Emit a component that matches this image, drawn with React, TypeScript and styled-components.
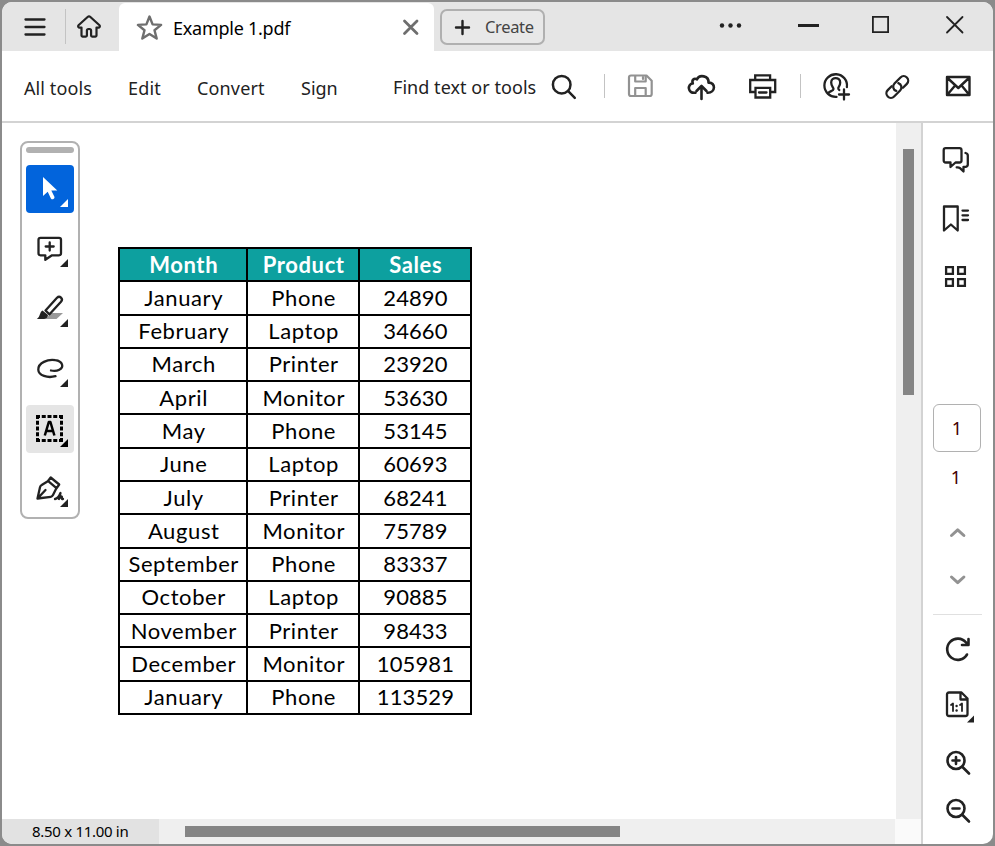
import React from "react";
import styled, { createGlobalStyle } from "styled-components";

const Global = createGlobalStyle`
  * { box-sizing: border-box; }
  html, body { margin: 0; padding: 0; background: #8b8b8b; }
  body { font-family: "Noto Sans", "Liberation Sans", sans-serif; color: #222; overflow: hidden; }
  svg { display: block; flex: none; overflow: visible; }
`;

const Frame = styled.div`
  width: 995px;
  height: 846px;
  padding: 2px;
  background: #8b8b8b;
`;
const Window = styled.div`
  display: flex;
  flex-direction: column;
  width: 991px;
  height: 842px;
  overflow: hidden;
  border-radius: 10px;
  background: #fff;
`;
const TitleBar = styled.header`
  display: flex;
  flex: none;
  height: 49px;
  background: #e5e5e5;
`;
const TitleLeft = styled.div`
  display: flex;
  align-items: center;
  width: 117px;
  padding-left: 22px;
`;
const Rule = styled.span<{ $h: number; $ml: number; $mr: number }>`
  flex: none;
  width: 1px;
  height: ${(p) => p.$h}px;
  margin: 0 ${(p) => p.$mr}px 0 ${(p) => p.$ml}px;
  background: #c3c3c3;
`;
const Tab = styled.div`
  display: flex;
  align-items: center;
  width: 315px;
  height: 48px;
  margin-top: 1px;
  padding: 0 15px 0 17px;
  border-radius: 6px 6px 0 0;
  background: #fff;
`;
const Label = styled.span<{ $size?: number; $track?: number; $color?: string }>`
  flex: none;
  white-space: nowrap;
  line-height: 24px;
  font-size: ${(p) => p.$size ?? 18}px;
  letter-spacing: ${(p) => p.$track ?? 0}px;
  color: ${(p) => p.$color ?? "#222"};
`;
const TabTitle = styled(Label)`
  flex: 1;
  margin: 2px 0 0 10px;
`;
const CreateButton = styled.button`
  display: flex;
  align-items: center;
  width: 105px;
  height: 36px;
  margin: 7px 0 0 6px;
  padding: 0 0 0 13px;
  gap: 15px;
  border: 2px solid #b0b0b0;
  border-radius: 7px;
  background: #e8e8e8;
  font-family: inherit;
`;
const WindowControls = styled.div`
  display: flex;
  align-items: flex-start;
  margin-left: auto;
  padding: 9px 24px 0 0;
`;
const ControlIcon = styled.span<{ $mr: number }>`
  margin-right: ${(p) => p.$mr}px;
`;
const Toolbar = styled.nav`
  display: flex;
  flex: none;
  align-items: center;
  height: 72px;
  padding-left: 22px;
  border-bottom: 2px solid #d3d3d3;
`;
const MenuItem = styled.div<{ $w: number; $pt?: number }>`
  flex: none;
  width: ${(p) => p.$w}px;
  padding-top: ${(p) => p.$pt ?? 4}px;
  line-height: 24px;
`;
const IconSlot = styled.span<{ $ml: number }>`
  flex: none;
  margin-left: ${(p) => p.$ml}px;
`;
const Body = styled.div`
  display: flex;
  flex: 1;
  min-height: 0;
`;
const Main = styled.div`
  display: flex;
  flex-direction: column;
  width: 919px;
`;
const Viewport = styled.div`
  display: flex;
  height: 696px;
`;
const Document = styled.main`
  display: flex;
  align-items: flex-start;
  width: 894px;
  padding: 18px 0 0 18px;
`;
const Palette = styled.aside`
  display: flex;
  flex-direction: column;
  align-items: center;
  flex: none;
  width: 60px;
  height: 378px;
  padding-top: 4px;
  border: 2px solid #b1b1b1;
  border-radius: 8px;
`;
const Grip = styled.div`
  flex: none;
  width: 48px;
  height: 6px;
  margin-bottom: 12px;
  border-radius: 3px;
  background: #b1b1b1;
`;
const Tool = styled.button<{ $bg?: string }>`
  width: 48px;
  height: 48px;
  flex: none;
  margin: 0 0 12px;
  padding: 0;
  border: 0;
  border-radius: 4px;
  background: ${(p) => p.$bg ?? "transparent"};
`;
const Sheet = styled.div`
  display: grid;
  grid-template-columns: 126px 110px 110px;
  grid-template-rows: repeat(14, 31.286px);
  gap: 2px;
  width: 354px;
  height: 468px;
  margin: 106px 0 0 38px;
  padding: 2px;
  background: #000;
`;
const Cell = styled.div<{ $head?: boolean; $track: number }>`
  display: flex;
  align-items: center;
  justify-content: center;
  font-family: "Lato", "Noto Sans", sans-serif;
  font-size: 22px;
  line-height: 30px;
  font-weight: ${(p) => (p.$head ? 700 : 400)};
  letter-spacing: ${(p) => p.$track}px;
  text-indent: ${(p) => p.$track + 0.8}px;
  white-space: nowrap;
  color: ${(p) => (p.$head ? "#fff" : "#000")};
  background: ${(p) => (p.$head ? "#0da09f" : "#fff")};
`;
const VTrack = styled.div`
  width: 25px;
  padding: 26px 0 0 7px;
  background: #efefef;
`;
const VThumb = styled.div`
  width: 11px;
  height: 246px;
  background: #858585;
`;
const StatusBar = styled.footer`
  display: flex;
  height: 25px;
`;
const PageSize = styled.div`
  width: 157px;
  padding-left: 30px;
  background: #e2e2e2;
`;
const HTrack = styled.div`
  width: 736px;
  padding: 7px 0 0 26px;
  background: #efefef;
`;
const HThumb = styled.div`
  width: 435px;
  height: 11px;
  background: #858585;
`;
const ScrollCorner = styled.div`
  width: 26px;
  background: #fafafa;
`;
const Rail = styled.aside`
  display: flex;
  flex-direction: column;
  align-items: center;
  width: 72px;
  padding-top: 21px;
  padding-right: 4px;
  border-left: 2px solid #d3d3d3;
`;
const RailIcon = styled.span<{ $mt: number }>`
  margin: ${(p) => p.$mt}px 0 0 4px;
`;
const PageBox = styled.div`
  width: 48px;
  height: 48px;
  margin: 116px 0 0 2px;
  padding-top: 11px;
  border: 1px solid #b1b1b1;
  border-radius: 6px;
  text-align: center;
`;
const PageCount = styled.div`
  margin-top: 13px;
  height: 24px;
`;
const RailRule = styled.div`
  width: 49px;
  height: 1px;
  margin: 20px 0 0 2px;
  background: #e0e0e0;
`;

type IconProps = { color?: string; sw?: number; size?: number; children: React.ReactNode };
const Icon = ({ color = "#222", sw = 2.3, size = 28, children }: IconProps) => (
  <svg width={size} height={size} viewBox={`0 0 ${size} ${size}`} fill="none" stroke={color} strokeWidth={sw} strokeLinecap="round" strokeLinejoin="round">
    {children}
  </svg>
);

const Corner = ({ color = "#222" }) => <path d="M42 34v8h-8z" fill={color} stroke="none" />;

const rows: [string, string, string][] = [
  ["January", "Phone", "24890"],
  ["February", "Laptop", "34660"],
  ["March", "Printer", "23920"],
  ["April", "Monitor", "53630"],
  ["May", "Phone", "53145"],
  ["June", "Laptop", "60693"],
  ["July", "Printer", "68241"],
  ["August", "Monitor", "75789"],
  ["September", "Phone", "83337"],
  ["October", "Laptop", "90885"],
  ["November", "Printer", "98433"],
  ["December", "Monitor", "105981"],
  ["January", "Phone", "113529"],
];

const Title = () => (
  <TitleBar>
    <TitleLeft>
      <Icon size={22}><path d="M1.500 3.500h19M1.500 11h19M1.500 18.500h19" /></Icon>
      <Rule $h={35} $ml={19} $mr={11} />
      <Icon size={24} sw={2.200}>
        <path d="M12 1.400c-.6 0-.9.2-1.400.6L1.500 10.200c-1 1 0 2.700 1.500 2.400h1.500v8q0 1 1 1h3.400q1 0 1-1v-5.100q0-1.500 1.600-1.500h1q1.600 0 1.600 1.500v5.100q0 1 1 1h3.400q1 0 1-1v-8h1.500c1.500.3 2.500-1.400 1.500-2.400L13.400 2q-.7-.6-1.400-.6z" />
      </Icon>
    </TitleLeft>
    <Tab>
      <Icon size={27} color="#6e6e6e" sw={2.400}>
        <path d="M13.500 2.500l3.100 7.900 8.500.5-6.600 5.400 2.200 8.300-7.200-4.700-7.200 4.700 2.200-8.300-6.600-5.400 8.500-.5z" />
      </Icon>
      <TabTitle $color="#000" $track={-0.25}>Example 1.pdf</TabTitle>
      <Icon size={16} color="#6e6e6e" sw={2.800}><path d="M1.500 2l12.500 12.500M14 2L1.500 14.500" /></Icon>
    </Tab>
    <CreateButton>
      <Icon size={15} sw={2.400}><path d="M7.500 1v13M1 7.500h13" /></Icon>
      <Label $size={16.5} $track={-0.35} $color="#444">Create</Label>
    </CreateButton>
    <WindowControls>
      <ControlIcon $mr={47}><Icon size={30}><g fill="#222" stroke="none"><circle cx="7" cy="14.500" r="2.200" /><circle cx="15.500" cy="14.500" r="2.200" /><circle cx="24" cy="14.500" r="2.200" /></g></Icon></ControlIcon>
      <ControlIcon $mr={47}><Icon size={28}><path d="M6 14.500h21" strokeWidth="3" strokeLinecap="butt" /></Icon></ControlIcon>
      <ControlIcon $mr={52}><Icon size={26} sw={1.800}><path d="M5.900 5.900h15.200v15.200H5.900z" strokeLinejoin="miter" /></Icon></ControlIcon>
      <Icon size={24} sw={1.800}><path d="M2 6l15.500 15.500M17.500 6L2 21.500" /></Icon>
    </WindowControls>
  </TitleBar>
);

const Tools = () => (
  <Toolbar>
    <MenuItem $w={104}><Label $track={0.1}>All tools</Label></MenuItem>
    <MenuItem $w={69}><Label $track={0.2}>Edit</Label></MenuItem>
    <MenuItem $w={104}><Label $track={0.15}>Convert</Label></MenuItem>
    <MenuItem $w={92}><Label>Sign</Label></MenuItem>
    <MenuItem $w={157} $pt={2}><Label $track={0.05}>Find text or tools</Label></MenuItem>
    <Icon sw={2.500}><circle cx="11.700" cy="12.700" r="8.800" /><path d="M18.200 19.200l6.600 6.600" /></Icon>
    <Rule $h={24} $ml={26} $mr={21} />
    <Icon color="#929292" sw={2.200}>
      <path d="M5 3.500h15.500l5.200 5.200V22q0 2-2 2H5q-2 0-2-2V5.500q0-2 2-2z" />
      <path d="M9.200 4v5.500h10.500V4M9.200 24v-8h10.500v8M17 5v2" />
    </Icon>
    <IconSlot $ml={34}><Icon sw={2.600}>
      <path d="M7.500 20.700C-.8 22-.8 11.700 4.800 11.500 3.500 7.800 6 5.800 9 7.300c2.300-5 12-3.900 11.500 3.300 7.300-.5 7.500 10.300-1 10.100" />
      <path d="M13.500 27V14.500M8.500 19l5-5 5 5" />
    </Icon></IconSlot>
    <IconSlot $ml={33}><Icon>
      <g strokeLinejoin="miter"><path d="M6.200 7.500V3.300h14.900v4.200M5.700 20H1.200V8h25v12h-4.500" /><path d="M6.500 15.800h14.700v9.700H6.500zM10 20.500h7.500" /></g>
    </Icon></IconSlot>
    <Rule $h={24} $ml={23} $mr={22} />
    <Icon>
      <path d="M23.900 15A11.300 11.300 0 1 0 13.500 24.800" />
      <path d="M5.300 21.200c1-2.200 5.200-2.200 5.200-4.200 0-1.500-2.300-3-2.300-6.500 0-5.800 9-5.800 9 0 0 3-1.500 4-1.900 5.500q-.2 1.300 1 2M21 17.500v10M16 22.500h10" />
    </Icon>
    <IconSlot $ml={32}><Icon sw={2.300}>
      <g transform="translate(14.300 15) rotate(-45)">
        <path d="M3.500 4.500H9a4.500 4.500 0 0 0 0-9H.5a4.500 4.500 0 0 0-4 6.500" />
        <path d="M-3.500-4.500H-9a4.500 4.500 0 0 0 0 9H-.5a4.500 4.500 0 0 0 4-6.500" />
      </g>
    </Icon></IconSlot>
    <IconSlot $ml={33}><Icon sw={2.400}>
      <path d="M3 5h22.500v18H3zM3 5.500l11.300 10.500L25.500 5.500M3.500 22.500l7.200-8.500M25 22.500l-7-8.500" />
    </Icon></IconSlot>
  </Toolbar>
);

const ToolPalette = () => (
  <Palette>
    <Grip />
    <Tool $bg="#0264dc"><Icon size={48}><path d="M17 12v19l4.700-4.200 3.200 6.600q1 1.500 2.600.6 1.500-.9.900-2.300l-3.100-6.200h6z" fill="#fff" stroke="none" /><Corner color="#fff" /></Icon></Tool>
    <Tool><Icon size={48}><path d="M14.500 12.800h18.500q2 0 2 2v13.500q0 2-2 2h-7l-6.700 4.500v-4.500h-4.800q-2 0-2-2v-13.500q0-2 2-2zM23.700 17.500v8M19.700 21.500h8" /><Corner /></Icon></Tool>
    <Tool><Icon size={48}>
      <path d="M25 28h12l-6.500 6H19.500z" fill="#999" stroke="none" />
      <path d="M19.500 25.500L31 12.800q2-2 4-.2 2 2 0 4.200L23.500 29.300z" fill="#fff" />
      <path d="M16.500 25.500l5.500 4.500q-.5 4-4 4h-7.200c3.700-2.500 2.500-6.500 5.700-8.500z" fill="#222" stroke="none" /><Corner />
    </Icon></Tool>
    <Tool><Icon size={48}><path d="M29.500 31.200c-8 2.200-17-.7-17.200-6.500-.2-7 9.500-10.700 17-9.500 7.500 1 9 7 4 9.500q-3.500 2-8.300.8" /><Corner /></Icon></Tool>
    <Tool $bg="#e5e5e5"><Icon size={48} color="#000">
      <path d="M10 11.500h27M10 35.500h27" strokeWidth="3" strokeLinecap="butt" strokeDasharray="4 1.750" />
      <path d="M11.500 10v27M35.500 10v27" strokeWidth="3" strokeLinecap="butt" strokeDasharray="4 1.750" />
      <path d="M18.800 30.500l4-13.500h1.600l4 13.500M20.300 26h6.500" strokeWidth="2.500" strokeLinecap="butt" /><Corner color="#000" />
    </Icon></Tool>
    <Tool><Icon size={48} sw={2.300}>
      <path d="M11.500 33.500l2.500-11.200q.4-1.500 1.700-2.200l6.500-4 8.300 7-3.500 7q-.7 1.500-2.200 1.700zM12 33l7.500-8M22 16l2.700-3.500 8.500 7-2.700 3.800M29 34c2.500-.5 4.500-3.500 5.500-6l-1.500 6c1.500-2.500 3-3.500 3-1.500v1.500h1" />
      <Corner />
    </Icon></Tool>
  </Palette>
);

const SideRail = () => (
  <Rail>
    <Icon>
      <path d="M3.700 4.200h13.800q2 0 2 2v10.300q0 2-2 2h-4L8.500 23v-4.500H3.700q-2 0-2-2V6.200q0-2 2-2z" />
      <path d="M23.500 9q2.300.5 2.300 2.500v9q0 2-2 2.300h-2.300v4.700l-3.500-3.300q-1.200-1-3.300-.8" />
    </Icon>
    <RailIcon $mt={30}><Icon><path d="M0 4.500h13.700v24L6.900 22.500 0 28.500z" /><path d="M18.500 8.600h5.500M18.500 13.300h5.500M18.500 18h5.500" /></Icon></RailIcon>
    <RailIcon $mt={30}><Icon><path d="M2.100 7.100h6.800v6.800H2.100zM14.100 7.100h6.800v6.800h-6.800zM2.100 19.100h6.800v6.800H2.100zM14.100 19.100h6.800v6.800h-6.800z" strokeLinejoin="miter" /></Icon></RailIcon>
    <PageBox><Label $color="#400">1</Label></PageBox>
    <PageCount><Label $color="#400">1</Label></PageCount>
    <RailIcon $mt={29}><Icon size={28} color="#929292" sw={3}><path d="M7.500 17.500l6.200-5.700 6.200 5.700" /></Icon></RailIcon>
    <RailIcon $mt={20}><Icon size={28} color="#929292" sw={3}><path d="M7.500 11l6.200 5.700 6.200-5.700" /></Icon></RailIcon>
    <RailRule />
    <RailIcon $mt={20}><Icon sw={2.600}><path d="M23 19.500A10.600 10.600 0 1 1 22 7.500l2 1.500M24.500 4v6h-6.500" /></Icon></RailIcon>
    <RailIcon $mt={27}><Icon>
      <path d="M5 2.500h12.500l6 6V24q0 2-2 2H5q-2 0-2-2V4.500q0-2 2-2zM16.500 3v6.500H23" />
      <path d="M7 15l2-1.500V21M16 15l2-1.500V21" strokeWidth="1.800" /><g fill="#222" stroke="none"><circle cx="12.600" cy="16" r="1.200" /><circle cx="12.600" cy="20.500" r="1.200" /></g>
      <path d="M30 25.500v7h-7z" fill="#222" stroke="none" />
    </Icon></RailIcon>
    <RailIcon $mt={30}><Icon sw={2.600}><circle cx="12" cy="12.500" r="8.500" /><path d="M18.500 19l6.500 6.500M12 9v7M8.500 12.500h7" /></Icon></RailIcon>
    <RailIcon $mt={20}><Icon sw={2.600}><circle cx="12" cy="12.500" r="8.500" /><path d="M18.500 19l6.500 6.500M8.500 12.500h7" /></Icon></RailIcon>
  </Rail>
);

export default function App() {
  return (
    <Frame>
      <Global />
      <Window>
        <Title />
        <Tools />
        <Body>
          <Main>
            <Viewport>
              <Document>
                <ToolPalette />
                <Sheet>
                  {["Month", "Product", "Sales"].map((h) => <Cell key={h} $head $track={0.6}>{h}</Cell>)}
                  {rows.map((r, i) => r.map((c, j) => <Cell key={`${i}-${j}`} $track={j === 2 ? 0.1 : 0.6}>{c}</Cell>))}
                </Sheet>
              </Document>
              <VTrack><VThumb /></VTrack>
            </Viewport>
            <StatusBar>
              <PageSize><Label $size={15} $track={-0.3} $color="#000">8.50 x 11.00 in</Label></PageSize>
              <HTrack><HThumb /></HTrack>
              <ScrollCorner />
            </StatusBar>
          </Main>
          <SideRail />
        </Body>
      </Window>
    </Frame>
  );
}
